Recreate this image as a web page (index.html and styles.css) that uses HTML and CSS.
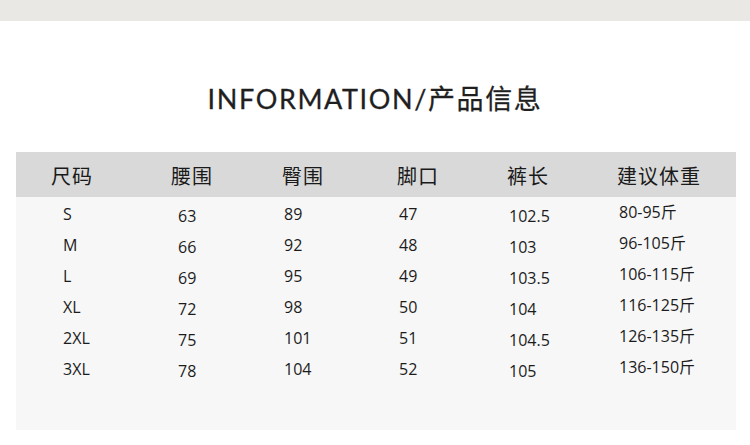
FILE: index.html
```html
<!DOCTYPE html>
<html lang="zh-CN">
<head>
<meta charset="utf-8">
<title>INFORMATION/产品信息</title>
<link rel="stylesheet" href="styles.css">
</head>
<body>
<div class="topbar"></div>
<h1 class="title">INFORMATION/产品信息</h1>
<div class="table">
  <div class="thead">
    <div class="th">尺码</div>
    <div class="th">腰围</div>
    <div class="th">臀围</div>
    <div class="th">脚口</div>
    <div class="th">裤长</div>
    <div class="th">建议体重</div>
  </div>
  <div class="tbody">
    <div class="row"><span class="c c1">S</span><span class="c c2">63</span><span class="c c3">89</span><span class="c c4">47</span><span class="c c5">102.5</span><span class="c c6">80-95斤</span></div>
    <div class="row"><span class="c c1">M</span><span class="c c2">66</span><span class="c c3">92</span><span class="c c4">48</span><span class="c c5">103</span><span class="c c6">96-105斤</span></div>
    <div class="row"><span class="c c1">L</span><span class="c c2">69</span><span class="c c3">95</span><span class="c c4">49</span><span class="c c5">103.5</span><span class="c c6">106-115斤</span></div>
    <div class="row"><span class="c c1">XL</span><span class="c c2">72</span><span class="c c3">98</span><span class="c c4">50</span><span class="c c5">104</span><span class="c c6">116-125斤</span></div>
    <div class="row"><span class="c c1">2XL</span><span class="c c2">75</span><span class="c c3">101</span><span class="c c4">51</span><span class="c c5">104.5</span><span class="c c6">126-135斤</span></div>
    <div class="row"><span class="c c1">3XL</span><span class="c c2">78</span><span class="c c3">104</span><span class="c c4">52</span><span class="c c5">105</span><span class="c c6">136-150斤</span></div>
  </div>
</div>
</body>
</html>
```
FILE: styles.css
```css
* { box-sizing: border-box; }
html, body { margin: 0; padding: 0; background: #fff; }
body {
  width: 750px;
  height: 445px;
  overflow: hidden;
  font-family: "Open Sans", "Noto Sans CJK SC", sans-serif;
  color: #1c1c1c;
}
.topbar {
  height: 21px;
  background: #e9e8e4;
}
.title {
  margin: 0;
  padding-top: 58px;
  height: 131px;
  text-align: center;
  font-family: "Lato", "Noto Sans CJK SC", sans-serif;
  font-weight: 400;
  font-size: 27px;
  line-height: 40px;
  letter-spacing: 1.6px;
  color: #1f1f1f;
  -webkit-text-stroke: 0.3px #1f1f1f;
}
.table {
  margin-left: 16px;
  width: 720px;
}
.thead {
  height: 45px;
  background: #d9d9d9;
  display: grid;
  grid-template-columns: 120px 111px 115px 110px 110px 1fr;
  padding-left: 35px;
  align-items: center;
}
.th {
  font-family: "Noto Sans CJK SC", sans-serif;
  font-size: 20px;
  line-height: 24px;
  letter-spacing: 1px;
  color: #1a1a1a;
  padding-top: 2px;
}
.tbody {
  background: #f7f7f7;
  height: 233px;
  padding-top: 2px;
  padding-left: 35px;
}
.row {
  display: grid;
  grid-template-columns: 120px 111px 115px 110px 110px 1fr;
  height: 31px;
}
.c {
  font-size: 16px;
  line-height: 31px;
  white-space: nowrap;
}
.c1 { padding-left: 12px; }
.c2 { padding-left: 7px; padding-top: 2px; }
.c3 { padding-left: 2px; }
.c4 { padding-left: 2px; }
.c5 { padding-left: 2px; padding-top: 2px; }
.c6 { padding-left: 2px; margin-top: -2px; }
```
